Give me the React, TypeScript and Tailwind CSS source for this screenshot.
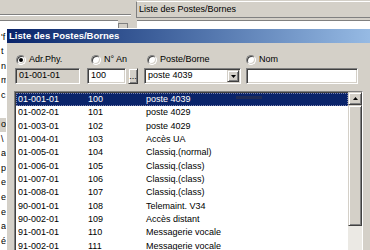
import React from 'react';

const sunken =
  'border border-t-[#808080] border-l-[#808080] border-b-white border-r-white shadow-[inset_1px_1px_0_#404040,inset_-1px_-1px_0_#d4d0c8]';
const raised =
  'border border-t-[#d4d0c8] border-l-[#d4d0c8] border-b-[#404040] border-r-[#404040] shadow-[inset_1px_1px_0_#ffffff,inset_-1px_-1px_0_#808080]';

const rows = [
  ['01-001-01', '100', 'poste 4039'],
  ['01-002-01', '101', 'poste 4029'],
  ['01-003-01', '102', 'poste 4029'],
  ['01-004-01', '103', 'Accès UA'],
  ['01-005-01', '104', 'Classiq.(normal)'],
  ['01-006-01', '105', 'Classiq.(class)'],
  ['01-007-01', '106', 'Classiq.(class)'],
  ['01-008-01', '107', 'Classiq.(class)'],
  ['90-001-01', '108', 'Telemaint. V34'],
  ['90-002-01', '109', 'Accès distant'],
  ['91-001-01', '110', 'Messagerie vocale'],
  ['91-002-01', '111', 'Messagerie vocale'],
];

// tails of the list behind the dialog
const behind = ["'f", 't', 'n', 'm', 'c', '', 'os', '\\', 'al', 'pe', 'e', 'e', 'e', 'a', 'é'];

const Radio = ({ checked }: { checked?: boolean }) => (
  <span className={`relative inline-block w-[10px] h-[10px] shrink-0 rounded-full bg-white ${sunken}`}>
    {checked && <span className="absolute left-[2px] top-[2px] w-[4px] h-[4px] rounded-full bg-black" />}
  </span>
);

const RadioLabel = ({ label, checked, width }: { label: string; checked?: boolean; width: string }) => (
  <div className={`flex items-center gap-[3px] ${width}`}>
    <Radio checked={checked} />
    <span>{label}</span>
  </div>
);

export default function App() {
  return (
    <div className="relative w-[370px] h-[250px] overflow-hidden bg-[#d4d0c8] text-black text-[9px] font-['Liberation_Sans',Arial,sans-serif]">
      {/* window behind */}
      <div className="flex h-[18px]">
        <div className="w-[131px] h-[15px] border-b border-[#808080] shadow-[0_1px_0_#ffffff]" />
        <div className="ml-[5px] mt-[1px] flex-1 h-[17px] flex items-center pl-[2px] border border-r-0 border-t-white border-l-[#808080] border-b-[#808080]">
          Liste des Postes/Bornes
        </div>
      </div>
      <div className="flex mt-[2px] h-[240px]">
        <div className="w-[118px] bg-white border-t border-[#808080] pt-[9px]">
          {behind.map((t, i) => (
            <div key={i} className={`h-[14.6px] flex items-center pl-[1px] ${t === 'os' ? 'bg-[#d4d0c8]' : ''}`}>
              {t}
            </div>
          ))}
        </div>
        <div className="w-[10px] h-[7px] mt-[3px] bg-[#d4d0c8] border border-[#808080]" />
        <div className="ml-[9px] flex-1 bg-white border-t border-[#808080]" />
      </div>

      {/* dialog */}
      <div className="absolute left-[6px] top-[28px] w-[400px] h-[230px] bg-[#d4d0c8] border-l border-t border-white">
        <div className="h-[14px] flex items-center pl-[2px] bg-linear-to-r from-[#0a246a] to-[#a6caf0] text-white font-bold text-[9.5px]">
          Liste des Postes/Bornes
        </div>

        <div className="flex items-center h-[12px] mt-[11px] pl-[9px]">
          <RadioLabel label="Adr.Phy." checked width="w-[75px]" />
          <RadioLabel label="N° An" width="w-[56px]" />
          <RadioLabel label="Poste/Borne" width="w-[99px]" />
          <RadioLabel label="Nom" width="w-[80px]" />
        </div>

        <div className="flex items-center h-[16px] mt-[2px] pl-[8px]">
          <div className={`w-[65px] h-[16px] flex items-center pl-[3px] bg-[#d4d0c8] ${sunken}`}>01-001-01</div>
          <div className={`ml-[7px] w-[39px] h-[16px] flex items-center pl-[3px] bg-white ${sunken}`}>100</div>
          <div className={`ml-[2px] w-[10px] h-[16px] flex items-end justify-center pb-[2px] leading-none bg-[#d4d0c8] ${raised}`}>...</div>
          <div className={`ml-[6px] w-[97px] h-[16px] flex items-stretch bg-white p-[1px] ${sunken}`}>
            <span className="flex-1 flex items-center pl-[2px]">poste 4039</span>
            <span className={`w-[12px] flex items-center justify-center bg-[#d4d0c8] ${raised}`}>
              <svg width="5" height="3" viewBox="0 0 5 3">
                <path d="M0 0h5L2.5 3z" fill="#000" />
              </svg>
            </span>
          </div>
          <div className={`ml-[5px] w-[112px] h-[16px] bg-white ${sunken}`} />
        </div>

        <div className={`ml-[7px] mt-[7px] w-[349px] h-[170px] flex bg-white ${sunken}`}>
          <div className="flex-1 pt-[1px] pl-[1px]">
            {rows.map((r, i) => (
              <div
                key={i}
                className={`relative flex items-center h-[13.33px] ${
                  i === 0 ? 'bg-[#0a246a] text-white border border-dotted border-[#7f86b0]' : 'border border-transparent'
                }`}
              >
                <span className="w-[71px] pl-[1px]">{r[0]}</span>
                <span className="w-[58px]">{r[1]}</span>
                <span>{r[2]}</span>
                {i === 0 && <span className="absolute left-[219px] top-[2px] w-[26px] h-[3px] bg-[#2a3050] opacity-70" />}
              </div>
            ))}
          </div>
          <div className="w-[14px] flex flex-col bg-[#ebe9e4]">
            <div className={`h-[13px] flex items-center justify-center bg-[#d4d0c8] ${raised}`}>
              <svg width="5" height="3" viewBox="0 0 5 3">
                <path d="M2.5 0L5 3H0z" fill="#000" />
              </svg>
            </div>
            <div className={`h-[121px] bg-[#d4d0c8] ${raised}`} />
          </div>
        </div>
      </div>
    </div>
  );
}
